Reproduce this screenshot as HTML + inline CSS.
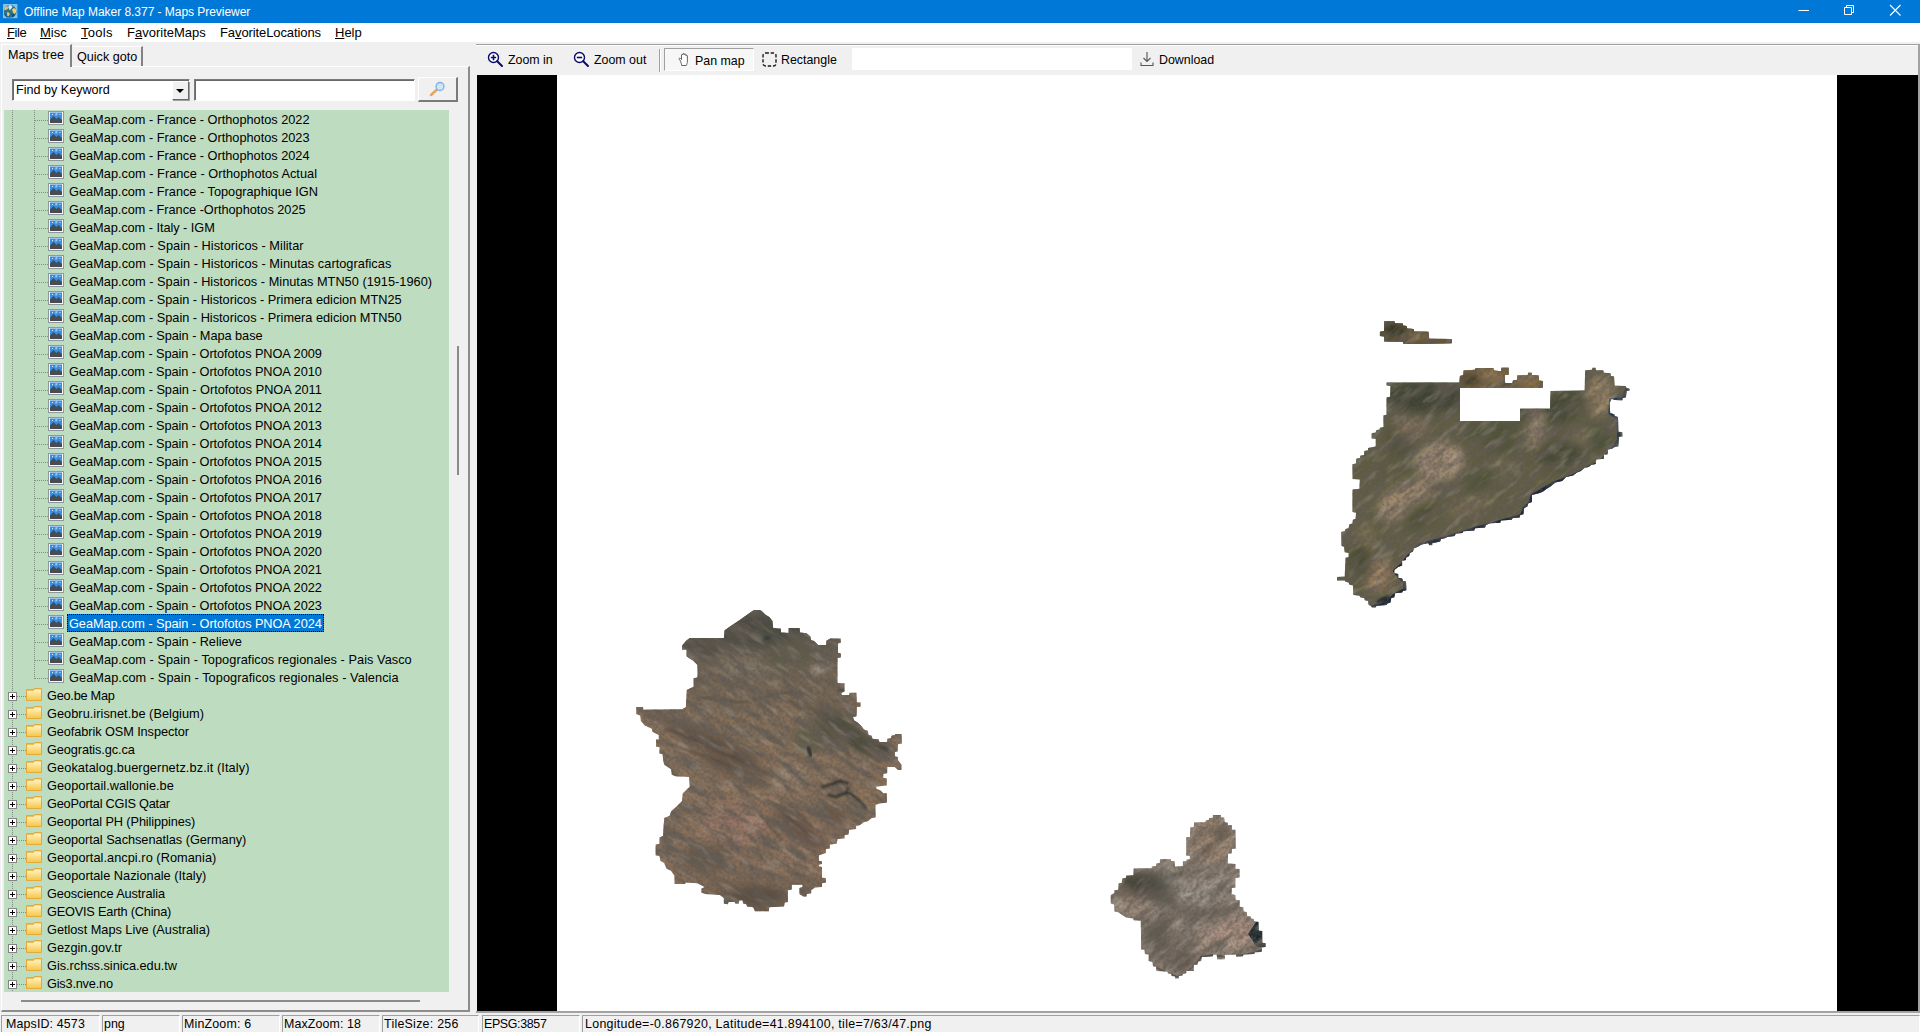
<!DOCTYPE html>
<html><head><meta charset="utf-8"><title>Offline Map Maker</title>
<style>
*{box-sizing:border-box;margin:0;padding:0}
html,body{width:1920px;height:1032px;overflow:hidden;background:#f0f0f0}
body{font-family:"Liberation Sans",sans-serif;font-size:12.5px;color:#000;position:relative}
i,b{display:block;font-style:normal;font-weight:normal}
.abs{position:absolute}
#title{position:absolute;left:0;top:0;width:1920px;height:23px;background:#0078d7;color:#fff}
#title .txt{position:absolute;left:24px;top:5px;font-size:12px;line-height:15px;white-space:nowrap;letter-spacing:-0.04px}
#menu{position:absolute;left:0;top:23px;width:1920px;height:19px;background:#fff}
#menu span{position:absolute;top:2px;font-size:13px;line-height:16px;white-space:nowrap}
#menu u{text-decoration:underline;text-underline-offset:1px}
/* left tab control */
#tabpage{position:absolute;left:1px;top:66px;width:469px;height:946px;border-top:1px solid #fff;border-left:1px solid #fff;border-right:2px solid #8c8c8c;border-bottom:2px solid #8c8c8c;background:#f0f0f0}
.tab{position:absolute;font-size:12.6px;line-height:15px;white-space:nowrap;background:#f0f0f0}
#tab1{left:1px;top:44px;width:71px;height:23px;border-left:1px solid #fff;border-top:1px solid #fff;border-right:2px solid #828282;padding:3px 0 0 6px;z-index:2}
#tab2{left:73px;top:46px;width:70px;height:20px;border-top:1px solid #fff;border-right:2px solid #828282;padding:3px 0 0 4px}
#combo{position:absolute;left:12px;top:79px;width:178px;height:22px;background:#fff;border:1px solid #7a7a7a;border-right-color:#fff;border-bottom-color:#fff;box-shadow:inset 1px 1px 0 #696969}
#combo .txt{position:absolute;left:3px;top:3px;font-size:12.6px;line-height:15px;white-space:nowrap}
#combo .btn{position:absolute;right:0px;top:1px;width:17px;height:19px;background:#f0f0f0;border:1px solid #fff;border-right-color:#696969;border-bottom-color:#696969;box-shadow:1px 1px 0 #a0a0a0}
#combo .btn:after{content:"";position:absolute;left:3px;top:7px;border:4px solid transparent;border-top:4px solid #000;border-bottom:0}
#kw{position:absolute;left:194px;top:79px;width:221px;height:22px;background:#fff;border:1px solid #7a7a7a;border-right-color:#fff;border-bottom-color:#fff;box-shadow:inset 1px 1px 0 #696969}
#sbtn{position:absolute;left:418px;top:77px;width:40px;height:25px;background:#f0f0f0;border:1px solid #fff;border-right:2px solid #7a7a7a;border-bottom:2px solid #7a7a7a}
#tree{position:absolute;left:4px;top:110px;width:445px;height:882px;background:#bedcc0;overflow:hidden}
.r{position:relative;height:18px;white-space:nowrap}
.r .t{position:absolute;top:0;font-size:12.75px;line-height:19px;height:17px;padding:0 1px}
.img .t{left:64px}
.dir .t{left:42px}
.sel .t{background:#0078d7;color:#fff;outline:1px dotted #0a0a0a;outline-offset:-1px;height:18px;left:63px;padding:0 2px}
.v1,.v2,.h1,.h2{position:absolute;background-repeat:repeat}
.v1{left:8px;top:0;width:1px;height:18px;background-image:linear-gradient(#7f8f80 50%,transparent 50%);background-size:1px 2px}
.v2{left:30px;top:0;width:1px;height:18px;background-image:linear-gradient(#7f8f80 50%,transparent 50%);background-size:1px 2px}
.last .v2{height:11px}
.h2{left:31px;top:10px;width:13px;height:1px;background-image:linear-gradient(90deg,#7f8f80 50%,transparent 50%);background-size:2px 1px}
.h1{left:13px;top:10px;width:9px;height:1px;background-image:linear-gradient(90deg,#7f8f80 50%,transparent 50%);background-size:2px 1px}
.pl{position:absolute;left:4px;top:6px;width:9px;height:9px;border:1px solid #848484;background:#fff}
.pl:before{content:"";position:absolute;left:1px;top:3px;width:5px;height:1px;background:#000}
.pl:after{content:"";position:absolute;left:3px;top:1px;width:1px;height:5px;background:#000}
.pic{position:absolute;left:44px;top:1px}
.fol{position:absolute;left:22px;top:1px}
#vthumb{position:absolute;left:457px;top:346px;width:2px;height:129px;background:#8b8b8b}
#hthumb{position:absolute;left:21px;top:1000px;width:399px;height:2px;background:#8b8b8b}
/* right */
#rtop{position:absolute;left:476px;top:44px;width:1444px;height:1px;background:#a0a0a0}
#rtop2{position:absolute;left:476px;top:45px;width:1444px;height:1px;background:#fff}
#tool{position:absolute;left:477px;top:46px;width:1443px;height:29px;background:#f0f0f0}
#tool .tb{position:absolute;top:7px;font-size:12.4px;line-height:15px;white-space:nowrap}
#mapwrap{position:absolute;left:477px;top:75px;width:1441px;height:936px;background:#000}
#canvas{position:absolute;left:80px;top:0;width:1280px;height:936px;background:#fff}
#status{position:absolute;left:0;top:1013px;width:1920px;height:19px;background:#f0f0f0}
.sp{position:absolute;top:2px;height:17px;border-left:1px solid #a0a0a0;border-top:1px solid #a0a0a0;border-right:1px solid #fff;font-size:12.4px;line-height:15px;padding:1px 0 0 2px;white-space:nowrap}
</style></head><body>
<svg width="0" height="0" style="position:absolute">
<defs>
<g id="pic"><rect x="0.5" y="0.5" width="15" height="13" fill="#f6f7f8" stroke="#8f969c"/><rect x="2" y="1.5" width="12" height="10.5" fill="#3c8edb"/><path d="M2 12 L2 8.5 L5.5 5 L8.5 8 L10.5 6 L14 9 L14 12Z" fill="#474c52"/><rect x="4" y="3" width="1" height="1" fill="#d5eafc"/><rect x="7.5" y="2.5" width="2" height="1" fill="#d5eafc"/><rect x="7.5" y="3.5" width="1" height="1" fill="#d5eafc"/><rect x="11.5" y="3" width="1" height="1" fill="#d5eafc"/></g>
<linearGradient id="fg" x1="0" y1="0" x2="0" y2="1"><stop offset="0" stop-color="#fff3c4"/><stop offset="1" stop-color="#f6c84a"/></linearGradient>
<g id="fol"><path d="M0.5 2.5 L0.5 13.5 L15.5 13.5 L15.5 1.5 L8.5 1.5 L7 2.5Z" fill="#f0bf52" stroke="#e3a93a" stroke-width="1"/><path d="M1 4 L7.5 4 L9 2.5 L15 2.5 L15 13 L1 13Z" fill="url(#fg)"/></g>
</defs></svg>

<div id="title"><svg class="abs" style="left:3px;top:4px" width="15" height="15" viewBox="0 0 15 15"><defs><filter id="ib" x="-20%" y="-20%" width="140%" height="140%"><feGaussianBlur stdDeviation="0.55"/></filter><clipPath id="ic"><rect x="0" y="0" width="14.4" height="14.2"/></clipPath></defs><rect x="0" y="0" width="14.4" height="14.2" fill="#7cc3ef"/><g clip-path="url(#ic)" filter="url(#ib)"><circle cx="7.2" cy="7.4" r="6.3" fill="#2a6f8e"/><path d="M1.5 4 C3 2 5 2.2 6 3 C5.5 5 3.5 6 1.3 6.2Z" fill="#f2b860"/><path d="M5.5 1.5 C7.5 0.8 9 1.5 9.5 3 C8.5 4.5 7.5 6 6.5 6.2 C5.8 4.5 5.5 3 5.5 1.5Z" fill="#d7ecf4"/><path d="M9.3 5 C11 3.6 12.8 4.5 13.2 6.5 C13 9 12 10.5 10.8 9.5 C9.8 8.2 9 6.5 9.3 5Z" fill="#f6d060"/><path d="M4 8.5 C5.5 8 6.8 9 6.5 10.5 C6 12 5 12.5 4.3 11.5Z" fill="#e8d070"/><path d="M1.5 9 C2.5 11.5 4 13.2 6 13.6 C4 13.9 2 12.5 1.2 10.5Z M8 10 C9.5 11 10 12.5 9 13.5 C10.5 13 11.5 12 12 10.5Z" fill="#174a5e"/></g></svg><span class="txt">Offline Map Maker 8.377 - Maps Previewer</span>
<svg class="abs" style="left:1798px;top:5px" width="12" height="12"><path d="M0.5 5.5H11" stroke="#fff" stroke-width="1"/></svg>
<svg class="abs" style="left:1843px;top:4px" width="13" height="13"><path d="M1.5 3.5H8.5V10.5H1.5Z M3.5 3.5V1.5H10.5V8.5H8.5" stroke="#fff" fill="none" stroke-width="1"/></svg>
<svg class="abs" style="left:1889px;top:4px" width="13" height="13"><path d="M1 1L11.5 11.5M11.5 1L1 11.5" stroke="#fff" stroke-width="1.1"/></svg>
</div>
<div id="menu"><span style="left:7px;letter-spacing:-0.45px"><u>F</u>ile</span><span style="left:40px"><u>M</u>isc</span><span style="left:81px;letter-spacing:0.3px"><u>T</u>ools</span><span style="left:127px">F<u>a</u>voriteMaps</span><span style="left:220px;letter-spacing:-0.1px">Fa<u>v</u>oriteLocations</span><span style="left:335px"><u>H</u>elp</span></div>

<div id="tabpage"></div>
<div class="tab" id="tab1">Maps tree</div>
<div class="tab" id="tab2">Quick goto</div>
<div id="combo"><span class="txt">Find by Keyword</span><i class="btn"></i></div>
<div id="kw"></div>
<div id="sbtn"><svg class="abs" style="left:10px;top:3px" width="18" height="17" viewBox="0 0 18 17"><path d="M2 14 L8 8.5" stroke="#e8a55a" stroke-width="2.4" stroke-linecap="round"/><circle cx="11" cy="5.5" r="4" fill="#cfe6f7" stroke="#7fb0e6" stroke-width="1.3"/></svg></div>
<div id="tree">
<div class="r img"><i class="v1"></i><i class="v2"></i><i class="h2"></i><svg class="pic" width="16" height="14" viewBox="0 0 16 14"><use href="#pic"/></svg><span class="t" style="letter-spacing:-0.012px">GeaMap.com - France - Orthophotos 2022</span></div>
<div class="r img"><i class="v1"></i><i class="v2"></i><i class="h2"></i><svg class="pic" width="16" height="14" viewBox="0 0 16 14"><use href="#pic"/></svg><span class="t" style="letter-spacing:-0.012px">GeaMap.com - France - Orthophotos 2023</span></div>
<div class="r img"><i class="v1"></i><i class="v2"></i><i class="h2"></i><svg class="pic" width="16" height="14" viewBox="0 0 16 14"><use href="#pic"/></svg><span class="t" style="letter-spacing:-0.012px">GeaMap.com - France - Orthophotos 2024</span></div>
<div class="r img"><i class="v1"></i><i class="v2"></i><i class="h2"></i><svg class="pic" width="16" height="14" viewBox="0 0 16 14"><use href="#pic"/></svg><span class="t" style="letter-spacing:0.017px">GeaMap.com - France - Orthophotos Actual</span></div>
<div class="r img"><i class="v1"></i><i class="v2"></i><i class="h2"></i><svg class="pic" width="16" height="14" viewBox="0 0 16 14"><use href="#pic"/></svg><span class="t" style="letter-spacing:-0.006px">GeaMap.com - France - Topographique IGN</span></div>
<div class="r img"><i class="v1"></i><i class="v2"></i><i class="h2"></i><svg class="pic" width="16" height="14" viewBox="0 0 16 14"><use href="#pic"/></svg><span class="t" style="letter-spacing:-0.023px">GeaMap.com - France -Orthophotos 2025</span></div>
<div class="r img"><i class="v1"></i><i class="v2"></i><i class="h2"></i><svg class="pic" width="16" height="14" viewBox="0 0 16 14"><use href="#pic"/></svg><span class="t" style="letter-spacing:-0.037px">GeaMap.com - Italy - IGM</span></div>
<div class="r img"><i class="v1"></i><i class="v2"></i><i class="h2"></i><svg class="pic" width="16" height="14" viewBox="0 0 16 14"><use href="#pic"/></svg><span class="t" style="letter-spacing:0.037px">GeaMap.com - Spain - Historicos - Militar</span></div>
<div class="r img"><i class="v1"></i><i class="v2"></i><i class="h2"></i><svg class="pic" width="16" height="14" viewBox="0 0 16 14"><use href="#pic"/></svg><span class="t" style="letter-spacing:0.037px">GeaMap.com - Spain - Historicos - Minutas cartograficas</span></div>
<div class="r img"><i class="v1"></i><i class="v2"></i><i class="h2"></i><svg class="pic" width="16" height="14" viewBox="0 0 16 14"><use href="#pic"/></svg><span class="t" style="letter-spacing:0.016px">GeaMap.com - Spain - Historicos - Minutas MTN50 (1915-1960)</span></div>
<div class="r img"><i class="v1"></i><i class="v2"></i><i class="h2"></i><svg class="pic" width="16" height="14" viewBox="0 0 16 14"><use href="#pic"/></svg><span class="t" style="letter-spacing:-0.008px">GeaMap.com - Spain - Historicos - Primera edicion MTN25</span></div>
<div class="r img"><i class="v1"></i><i class="v2"></i><i class="h2"></i><svg class="pic" width="16" height="14" viewBox="0 0 16 14"><use href="#pic"/></svg><span class="t" style="letter-spacing:-0.008px">GeaMap.com - Spain - Historicos - Primera edicion MTN50</span></div>
<div class="r img"><i class="v1"></i><i class="v2"></i><i class="h2"></i><svg class="pic" width="16" height="14" viewBox="0 0 16 14"><use href="#pic"/></svg><span class="t" style="letter-spacing:-0.045px">GeaMap.com - Spain - Mapa base</span></div>
<div class="r img"><i class="v1"></i><i class="v2"></i><i class="h2"></i><svg class="pic" width="16" height="14" viewBox="0 0 16 14"><use href="#pic"/></svg><span class="t" style="letter-spacing:-0.060px">GeaMap.com - Spain - Ortofotos PNOA 2009</span></div>
<div class="r img"><i class="v1"></i><i class="v2"></i><i class="h2"></i><svg class="pic" width="16" height="14" viewBox="0 0 16 14"><use href="#pic"/></svg><span class="t" style="letter-spacing:-0.060px">GeaMap.com - Spain - Ortofotos PNOA 2010</span></div>
<div class="r img"><i class="v1"></i><i class="v2"></i><i class="h2"></i><svg class="pic" width="16" height="14" viewBox="0 0 16 14"><use href="#pic"/></svg><span class="t" style="letter-spacing:-0.036px">GeaMap.com - Spain - Ortofotos PNOA 2011</span></div>
<div class="r img"><i class="v1"></i><i class="v2"></i><i class="h2"></i><svg class="pic" width="16" height="14" viewBox="0 0 16 14"><use href="#pic"/></svg><span class="t" style="letter-spacing:-0.060px">GeaMap.com - Spain - Ortofotos PNOA 2012</span></div>
<div class="r img"><i class="v1"></i><i class="v2"></i><i class="h2"></i><svg class="pic" width="16" height="14" viewBox="0 0 16 14"><use href="#pic"/></svg><span class="t" style="letter-spacing:-0.060px">GeaMap.com - Spain - Ortofotos PNOA 2013</span></div>
<div class="r img"><i class="v1"></i><i class="v2"></i><i class="h2"></i><svg class="pic" width="16" height="14" viewBox="0 0 16 14"><use href="#pic"/></svg><span class="t" style="letter-spacing:-0.060px">GeaMap.com - Spain - Ortofotos PNOA 2014</span></div>
<div class="r img"><i class="v1"></i><i class="v2"></i><i class="h2"></i><svg class="pic" width="16" height="14" viewBox="0 0 16 14"><use href="#pic"/></svg><span class="t" style="letter-spacing:-0.060px">GeaMap.com - Spain - Ortofotos PNOA 2015</span></div>
<div class="r img"><i class="v1"></i><i class="v2"></i><i class="h2"></i><svg class="pic" width="16" height="14" viewBox="0 0 16 14"><use href="#pic"/></svg><span class="t" style="letter-spacing:-0.060px">GeaMap.com - Spain - Ortofotos PNOA 2016</span></div>
<div class="r img"><i class="v1"></i><i class="v2"></i><i class="h2"></i><svg class="pic" width="16" height="14" viewBox="0 0 16 14"><use href="#pic"/></svg><span class="t" style="letter-spacing:-0.060px">GeaMap.com - Spain - Ortofotos PNOA 2017</span></div>
<div class="r img"><i class="v1"></i><i class="v2"></i><i class="h2"></i><svg class="pic" width="16" height="14" viewBox="0 0 16 14"><use href="#pic"/></svg><span class="t" style="letter-spacing:-0.060px">GeaMap.com - Spain - Ortofotos PNOA 2018</span></div>
<div class="r img"><i class="v1"></i><i class="v2"></i><i class="h2"></i><svg class="pic" width="16" height="14" viewBox="0 0 16 14"><use href="#pic"/></svg><span class="t" style="letter-spacing:-0.060px">GeaMap.com - Spain - Ortofotos PNOA 2019</span></div>
<div class="r img"><i class="v1"></i><i class="v2"></i><i class="h2"></i><svg class="pic" width="16" height="14" viewBox="0 0 16 14"><use href="#pic"/></svg><span class="t" style="letter-spacing:-0.060px">GeaMap.com - Spain - Ortofotos PNOA 2020</span></div>
<div class="r img"><i class="v1"></i><i class="v2"></i><i class="h2"></i><svg class="pic" width="16" height="14" viewBox="0 0 16 14"><use href="#pic"/></svg><span class="t" style="letter-spacing:-0.060px">GeaMap.com - Spain - Ortofotos PNOA 2021</span></div>
<div class="r img"><i class="v1"></i><i class="v2"></i><i class="h2"></i><svg class="pic" width="16" height="14" viewBox="0 0 16 14"><use href="#pic"/></svg><span class="t" style="letter-spacing:-0.060px">GeaMap.com - Spain - Ortofotos PNOA 2022</span></div>
<div class="r img"><i class="v1"></i><i class="v2"></i><i class="h2"></i><svg class="pic" width="16" height="14" viewBox="0 0 16 14"><use href="#pic"/></svg><span class="t" style="letter-spacing:-0.060px">GeaMap.com - Spain - Ortofotos PNOA 2023</span></div>
<div class="r img sel"><i class="v1"></i><i class="v2"></i><i class="h2"></i><svg class="pic" width="16" height="14" viewBox="0 0 16 14"><use href="#pic"/></svg><span class="t" style="letter-spacing:-0.060px">GeaMap.com - Spain - Ortofotos PNOA 2024</span></div>
<div class="r img"><i class="v1"></i><i class="v2"></i><i class="h2"></i><svg class="pic" width="16" height="14" viewBox="0 0 16 14"><use href="#pic"/></svg><span class="t" style="letter-spacing:-0.053px">GeaMap.com - Spain - Relieve</span></div>
<div class="r img"><i class="v1"></i><i class="v2"></i><i class="h2"></i><svg class="pic" width="16" height="14" viewBox="0 0 16 14"><use href="#pic"/></svg><span class="t" style="letter-spacing:0.041px">GeaMap.com - Spain - Topograficos regionales - Pais Vasco</span></div>
<div class="r img last"><i class="v1"></i><i class="v2"></i><i class="h2"></i><svg class="pic" width="16" height="14" viewBox="0 0 16 14"><use href="#pic"/></svg><span class="t" style="letter-spacing:0.075px">GeaMap.com - Spain - Topograficos regionales - Valencia</span></div>
<div class="r dir"><i class="v1"></i><i class="h1"></i><b class="pl"></b><svg class="fol" width="16" height="14" viewBox="0 0 16 14"><use href="#fol"/></svg><span class="t" style="letter-spacing:-0.252px">Geo.be Map</span></div>
<div class="r dir"><i class="v1"></i><i class="h1"></i><b class="pl"></b><svg class="fol" width="16" height="14" viewBox="0 0 16 14"><use href="#fol"/></svg><span class="t" style="letter-spacing:0.042px">Geobru.irisnet.be (Belgium)</span></div>
<div class="r dir"><i class="v1"></i><i class="h1"></i><b class="pl"></b><svg class="fol" width="16" height="14" viewBox="0 0 16 14"><use href="#fol"/></svg><span class="t" style="letter-spacing:-0.089px">Geofabrik OSM Inspector</span></div>
<div class="r dir"><i class="v1"></i><i class="h1"></i><b class="pl"></b><svg class="fol" width="16" height="14" viewBox="0 0 16 14"><use href="#fol"/></svg><span class="t" style="letter-spacing:-0.107px">Geogratis.gc.ca</span></div>
<div class="r dir"><i class="v1"></i><i class="h1"></i><b class="pl"></b><svg class="fol" width="16" height="14" viewBox="0 0 16 14"><use href="#fol"/></svg><span class="t" style="letter-spacing:0.093px">Geokatalog.buergernetz.bz.it (Italy)</span></div>
<div class="r dir"><i class="v1"></i><i class="h1"></i><b class="pl"></b><svg class="fol" width="16" height="14" viewBox="0 0 16 14"><use href="#fol"/></svg><span class="t" style="letter-spacing:0.030px">Geoportail.wallonie.be</span></div>
<div class="r dir"><i class="v1"></i><i class="h1"></i><b class="pl"></b><svg class="fol" width="16" height="14" viewBox="0 0 16 14"><use href="#fol"/></svg><span class="t" style="letter-spacing:-0.240px">GeoPortal CGIS Qatar</span></div>
<div class="r dir"><i class="v1"></i><i class="h1"></i><b class="pl"></b><svg class="fol" width="16" height="14" viewBox="0 0 16 14"><use href="#fol"/></svg><span class="t" style="letter-spacing:-0.110px">Geoportal PH (Philippines)</span></div>
<div class="r dir"><i class="v1"></i><i class="h1"></i><b class="pl"></b><svg class="fol" width="16" height="14" viewBox="0 0 16 14"><use href="#fol"/></svg><span class="t" style="letter-spacing:-0.041px">Geoportal Sachsenatlas (Germany)</span></div>
<div class="r dir"><i class="v1"></i><i class="h1"></i><b class="pl"></b><svg class="fol" width="16" height="14" viewBox="0 0 16 14"><use href="#fol"/></svg><span class="t" style="letter-spacing:0.049px">Geoportal.ancpi.ro (Romania)</span></div>
<div class="r dir"><i class="v1"></i><i class="h1"></i><b class="pl"></b><svg class="fol" width="16" height="14" viewBox="0 0 16 14"><use href="#fol"/></svg><span class="t" style="letter-spacing:0.020px">Geoportale Nazionale (Italy)</span></div>
<div class="r dir"><i class="v1"></i><i class="h1"></i><b class="pl"></b><svg class="fol" width="16" height="14" viewBox="0 0 16 14"><use href="#fol"/></svg><span class="t" style="letter-spacing:-0.094px">Geoscience Australia</span></div>
<div class="r dir"><i class="v1"></i><i class="h1"></i><b class="pl"></b><svg class="fol" width="16" height="14" viewBox="0 0 16 14"><use href="#fol"/></svg><span class="t" style="letter-spacing:-0.209px">GEOVIS Earth (China)</span></div>
<div class="r dir"><i class="v1"></i><i class="h1"></i><b class="pl"></b><svg class="fol" width="16" height="14" viewBox="0 0 16 14"><use href="#fol"/></svg><span class="t" style="letter-spacing:-0.025px">Getlost Maps Live (Australia)</span></div>
<div class="r dir"><i class="v1"></i><i class="h1"></i><b class="pl"></b><svg class="fol" width="16" height="14" viewBox="0 0 16 14"><use href="#fol"/></svg><span class="t" style="letter-spacing:0.009px">Gezgin.gov.tr</span></div>
<div class="r dir"><i class="v1"></i><i class="h1"></i><b class="pl"></b><svg class="fol" width="16" height="14" viewBox="0 0 16 14"><use href="#fol"/></svg><span class="t" style="letter-spacing:-0.018px">Gis.rchss.sinica.edu.tw</span></div>
<div class="r dir"><i class="v1"></i><i class="h1"></i><b class="pl"></b><svg class="fol" width="16" height="14" viewBox="0 0 16 14"><use href="#fol"/></svg><span class="t" style="letter-spacing:-0.205px">Gis3.nve.no</span></div>
</div>
<i id="vthumb"></i><i id="hthumb"></i>

<i id="rtop"></i><i id="rtop2"></i>
<div id="tool">
<svg class="abs" style="left:10px;top:5px" width="17" height="17" viewBox="0 0 17 17"><circle cx="6.5" cy="6.5" r="5" fill="#fff" stroke="#0a0a6e" stroke-width="1.4"/><path d="M3.8 6.5H9.2M6.5 3.8V9.2" stroke="#0a0a6e" stroke-width="1.6"/><path d="M10.2 10.2L15 15" stroke="#0a0a6e" stroke-width="2" stroke-linecap="round"/></svg>
<span class="tb" style="left:31px">Zoom in</span>
<svg class="abs" style="left:96px;top:5px" width="17" height="17" viewBox="0 0 17 17"><circle cx="6.5" cy="6.5" r="5" fill="#fff" stroke="#0a0a6e" stroke-width="1.4"/><path d="M3.8 6.5H9.2" stroke="#0a0a6e" stroke-width="1.6"/><path d="M10.2 10.2L15 15" stroke="#0a0a6e" stroke-width="2" stroke-linecap="round"/></svg>
<span class="tb" style="left:117px">Zoom out</span>
<i class="abs" style="left:182px;top:3px;width:1px;height:23px;background:#a0a0a0"></i><i class="abs" style="left:183px;top:3px;width:1px;height:23px;background:#fff"></i>
<div class="abs" style="left:187px;top:2px;width:90px;height:23px;background:#f7f7f7;border-left:1px solid #a0a0a0;border-top:1px solid #a0a0a0;border-right:1px solid #fff;border-bottom:1px solid #fff"></div>
<svg class="abs" style="left:200px;top:6px" width="14" height="17" viewBox="0 0 14 17"><path d="M3.5 9 L2.2 7.2 C1.6 6.4 2.8 5.6 3.5 6.4 L4.5 7.5 V3 C4.5 2 6 2 6 3 V2.2 C6 1.2 7.5 1.2 7.5 2.2 V2.8 C7.5 1.9 9 1.9 9 2.8 V3.8 C9 3 10.4 3 10.4 3.9 V9 C10.4 11 9.8 12.5 9.3 13.5 H4.8 C4.5 12 4 10.5 3.5 9Z" fill="#fff" stroke="#555" stroke-width="0.9"/></svg>
<span class="tb" style="left:218px;top:8px">Pan map</span>
<svg class="abs" style="left:285px;top:6px" width="15" height="15" viewBox="0 0 15 15"><rect x="1" y="1" width="13" height="13" rx="2.5" fill="none" stroke="#1a1a1a" stroke-width="1.4" stroke-dasharray="3.4 1.8"/></svg>
<span class="tb" style="left:304px">Rectangle</span>
<div class="abs" style="left:375px;top:2px;width:280px;height:22px;background:#fff"></div>
<svg class="abs" style="left:663px;top:5px" width="14" height="16" viewBox="0 0 14 16"><path d="M7 1V10M3.5 7L7 10.5L10.5 7" fill="none" stroke="#555" stroke-width="1.1"/><path d="M1 11.5V14.5H13V11.5" fill="none" stroke="#555" stroke-width="1.1"/></svg>
<span class="tb" style="left:682px">Download</span>
</div>
<i class="abs" style="left:476px;top:1011px;width:1444px;height:2px;background:linear-gradient(#9c9c9c,#a8a8a8)"></i><i class="abs" style="left:476px;top:1013px;width:1444px;height:1px;background:#fff"></i><i class="abs" style="left:1918px;top:44px;width:2px;height:969px;background:#a2a2a2"></i>
<div id="mapwrap"><div id="canvas">
<svg class="abs" style="left:0;top:0" width="1280" height="936" viewBox="557 75 1280 936">
<defs>
<clipPath id="cExt"><polygon points="760.0,610.1 761.6,610.9 765.4,614.7 769.3,617.1 772.4,620.9 773.2,627.9 780.9,628.7 780.9,632.6 788.7,632.9 788.7,627.9 799.5,627.9 800.0,632.6 806.5,633.3 810.4,636.4 811.2,640.3 814.3,641.1 818.1,645.0 825.9,645.0 826.7,640.6 830.5,638.4 840.6,638.4 840.9,642.6 838.0,643.4 838.0,652.7 840.9,653.5 840.9,657.4 837.5,658.1 837.5,682.9 844.5,683.3 844.5,691.5 841.4,693.0 841.9,694.9 849.1,694.9 849.6,692.7 856.4,692.7 856.9,702.3 860.5,702.6 860.5,706.7 856.9,707.0 856.4,716.3 853.0,717.1 853.8,720.2 857.7,722.5 860.8,725.6 863.9,729.5 867.8,731.0 868.5,734.9 871.6,735.7 872.4,738.8 878.6,739.5 879.4,741.9 887.1,741.9 887.4,738.8 891.0,738.0 891.5,735.7 894.9,734.9 895.2,734.1 901.4,734.1 901.9,743.4 898.0,744.2 897.7,751.2 894.9,751.9 894.9,756.6 897.7,756.9 897.7,760.0 901.4,764.7 901.4,770.1 898.0,770.1 894.9,767.0 887.4,767.0 887.1,773.2 883.3,774.0 883.3,777.8 886.8,778.6 886.8,785.6 876.3,786.4 876.3,788.7 880.2,790.2 883.3,793.3 886.8,793.3 886.8,802.6 879.4,803.4 875.5,805.0 875.5,817.4 871.6,818.1 867.8,821.2 863.9,822.0 860.0,825.1 856.1,825.9 856.1,829.0 849.1,829.8 848.4,834.4 844.5,835.2 844.5,838.3 837.5,839.1 836.7,843.7 829.8,844.5 829.8,848.4 825.9,849.1 825.9,853.0 818.9,855.3 818.9,860.8 822.0,861.6 822.0,863.9 818.9,864.7 818.9,866.2 822.0,867.0 822.0,877.8 825.9,878.1 825.9,882.5 822.0,883.3 822.0,887.1 815.0,887.4 811.2,890.2 811.2,893.3 806.5,894.1 806.5,896.4 803.4,896.4 799.5,894.1 799.5,887.9 802.6,887.1 802.2,884.8 791.8,884.8 791.8,889.5 787.9,890.2 787.9,901.9 784.8,902.6 784.0,906.5 769.3,907.3 768.8,911.2 768.8,911.2 754.9,911.2 753.3,907.3 747.1,906.5 746.4,904.2 743.3,903.4 742.5,900.3 739.4,900.3 738.6,903.4 735.5,903.4 734.7,901.9 728.5,901.9 727.8,904.2 723.9,903.4 723.9,898.0 720.0,894.9 705.3,894.1 701.4,892.6 701.4,888.7 704.5,887.1 697.5,883.3 685.9,882.5 685.1,884.0 674.6,884.0 674.3,875.5 671.2,870.9 666.5,868.5 664.2,863.1 660.3,860.8 659.5,856.1 655.7,855.3 655.7,844.5 659.5,843.7 659.5,837.5 663.1,836.0 664.2,818.1 669.6,815.8 671.2,811.2 675.0,808.1 678.9,804.2 682.0,801.1 682.8,793.3 686.7,789.5 689.8,787.1 689.0,777.1 675.8,776.3 671.9,774.7 671.2,769.3 664.2,764.7 663.1,760.0 662.6,754.3 659.5,753.5 659.5,747.3 656.0,746.5 656.0,739.5 658.8,739.5 658.8,734.9 652.6,731.8 651.8,728.7 644.8,725.6 640.9,720.9 640.2,715.5 636.3,714.0 636.3,707.0 643.0,707.0 643.3,709.8 682.0,709.3 685.9,707.0 686.7,689.9 693.6,686.8 693.6,678.3 697.5,677.5 697.5,665.1 692.9,660.5 686.7,656.6 686.7,649.6 682.0,649.6 682.0,645.7 685.9,641.0 689.8,638.0 723.9,638.0 724.7,630.2 731.6,625.6 739.4,620.2 747.1,614.7 754.1,610.1"/></clipPath>
<clipPath id="cCat"><polygon points="1386.6,382.6 1459.5,382.6 1459.9,375.9 1463.3,375.1 1463.6,370.5 1475.0,369.7 1475.7,368.1 1493.2,368.1 1494.0,370.5 1500.9,371.2 1501.4,367.7 1508.7,367.7 1508.7,374.8 1504.8,375.1 1505.1,382.9 1512.6,383.2 1512.9,380.5 1516.9,380.1 1517.2,375.4 1527.8,375.1 1528.1,372.8 1531.5,372.8 1531.9,375.1 1538.6,375.4 1538.9,380.5 1542.8,381.0 1542.8,387.7 1460.0,387.9 1460.0,420.9 1520.0,420.9 1520.0,408.8 1550.1,408.8 1550.5,390.9 1584.7,390.6 1585.1,370.2 1591.9,369.7 1592.4,367.7 1595.5,367.7 1596.0,370.2 1603.3,370.5 1603.7,372.8 1610.5,373.3 1611.0,375.9 1614.1,376.4 1614.6,385.7 1625.7,386.0 1626.5,388.3 1629.6,388.8 1629.6,390.6 1626.5,390.9 1626.0,397.6 1622.6,398.1 1622.3,400.2 1614.9,399.9 1611.5,398.7 1609.5,403.0 1610.2,413.1 1614.1,414.2 1614.9,416.2 1618.0,417.0 1618.3,431.7 1622.3,432.2 1622.6,436.4 1618.8,436.8 1618.3,446.4 1614.9,446.7 1611.8,448.8 1607.9,449.5 1607.4,454.2 1604.0,454.5 1603.7,458.8 1596.3,459.6 1595.5,463.9 1591.6,464.7 1588.5,467.0 1584.7,467.8 1580.8,470.9 1576.9,472.4 1573.0,475.5 1566.0,477.1 1562.2,480.9 1555.2,482.5 1550.5,486.4 1546.7,488.7 1542.8,491.8 1538.9,493.3 1531.9,494.9 1531.9,501.9 1528.1,503.4 1527.3,506.5 1524.2,508.1 1523.4,514.3 1520.3,515.0 1519.5,517.4 1512.6,518.1 1511.8,519.7 1500.9,520.5 1500.2,522.8 1490.1,523.3 1485.8,525.1 1485.0,527.4 1475.0,528.2 1474.2,530.5 1463.3,531.3 1462.6,532.9 1455.6,533.6 1454.8,536.0 1447.8,536.7 1444.7,538.3 1440.9,539.1 1440.1,541.4 1437.0,542.2 1432.3,542.9 1432.3,545.3 1429.2,545.3 1428.4,542.9 1421.5,544.5 1417.6,546.8 1413.7,548.4 1412.9,551.5 1409.8,553.0 1409.1,556.1 1406.0,557.7 1406.0,560.0 1402.1,560.8 1402.1,565.4 1398.2,567.0 1394.3,570.1 1394.3,573.2 1398.2,574.0 1398.2,577.8 1402.1,578.6 1402.9,580.9 1406.0,581.7 1406.3,590.2 1402.9,591.0 1402.1,592.6 1395.1,593.3 1394.3,597.2 1391.2,598.0 1390.5,602.6 1387.4,603.4 1386.6,605.0 1376.5,605.7 1375.7,607.3 1371.9,607.3 1371.1,605.7 1368.8,605.0 1368.0,601.1 1364.9,600.3 1364.1,598.0 1360.2,597.2 1359.5,595.7 1353.3,594.9 1352.9,585.6 1349.4,584.8 1348.6,582.5 1345.5,581.7 1344.7,580.6 1337.0,580.6 1337.0,577.1 1344.7,576.6 1345.5,557.7 1348.6,556.9 1348.6,553.0 1344.7,552.2 1344.0,546.8 1341.6,546.0 1341.2,532.1 1344.7,531.3 1345.5,529.0 1348.6,528.2 1349.4,524.3 1352.5,523.6 1352.9,519.7 1355.6,518.9 1356.0,512.7 1352.5,511.9 1352.5,489.5 1359.5,488.7 1359.8,479.4 1352.5,478.9 1352.5,464.3 1356.0,463.5 1356.4,458.8 1360.2,458.1 1360.2,455.7 1364.1,455.0 1364.4,451.1 1368.0,450.3 1368.0,448.0 1371.9,447.2 1375.7,446.4 1375.7,438.7 1371.6,438.4 1371.6,433.3 1375.7,432.5 1376.2,430.2 1379.6,429.4 1379.9,427.8 1383.5,427.1 1383.5,415.4 1386.6,414.7 1386.6,397.6 1390.2,396.8 1390.5,386.0 1386.6,385.2"/><polygon points="1384.3,321.2 1394.3,321.2 1395.1,323.2 1402.9,323.6 1402.9,325.5 1406.7,326.0 1407.2,328.6 1413.7,328.9 1414.0,331.4 1428.4,331.7 1429.2,338.7 1451.7,339.1 1451.7,343.3 1429.2,343.8 1403.6,344.1 1402.9,341.8 1384.3,341.5 1384.0,336.4 1379.9,336.0 1379.9,331.7 1384.0,330.9"/></clipPath>
<clipPath id="cMur"><polygon points="1212.9,815.1 1220.9,815.1 1220.9,817.2 1224.2,817.7 1224.6,822.3 1227.9,822.8 1227.9,825.2 1231.7,825.2 1232.1,829.8 1235.4,829.8 1235.7,848.6 1231.7,849.0 1231.7,853.3 1227.9,853.7 1227.9,863.6 1235.4,863.9 1235.4,868.7 1239.5,868.9 1239.6,877.6 1235.4,878.1 1235.4,887.5 1231.7,887.9 1231.7,894.0 1235.4,895.0 1235.7,899.7 1239.6,900.2 1239.6,906.7 1243.4,907.2 1243.4,911.4 1246.7,911.9 1247.2,916.1 1250.4,916.6 1250.9,918.4 1253.7,918.9 1254.2,921.2 1258.4,921.7 1258.6,930.6 1262.2,931.1 1262.2,942.8 1265.4,943.3 1265.4,947.0 1262.0,947.5 1261.7,952.0 1254.7,952.2 1254.2,954.1 1243.4,954.5 1242.9,956.4 1236.4,956.4 1235.9,954.5 1224.7,955.0 1224.7,959.2 1217.2,959.2 1216.7,954.5 1212.9,954.5 1212.9,956.4 1201.7,956.9 1201.2,961.1 1198.0,961.5 1197.5,964.4 1193.7,964.8 1193.7,970.9 1186.2,971.1 1186.2,973.3 1182.9,973.7 1182.5,975.6 1178.7,976.1 1178.7,978.4 1175.0,978.4 1175.0,976.5 1171.7,976.1 1171.2,973.7 1168.0,973.3 1167.5,971.4 1156.2,970.9 1156.2,966.7 1153.0,966.2 1152.5,962.0 1148.7,961.1 1148.7,954.5 1145.0,954.1 1144.5,949.8 1141.2,949.4 1140.8,920.5 1133.7,920.3 1133.3,918.4 1126.2,917.5 1122.5,915.2 1118.3,912.3 1114.5,911.4 1114.1,904.4 1110.8,903.4 1110.8,895.0 1114.5,893.0 1114.5,890.3 1118.3,889.8 1118.7,883.3 1122.0,882.8 1122.5,878.6 1125.8,878.1 1126.2,875.8 1133.5,875.3 1133.7,868.5 1151.5,868.3 1152.0,866.4 1156.0,865.9 1156.2,863.6 1159.8,863.1 1160.0,859.2 1170.8,859.2 1171.0,861.0 1174.5,861.2 1175.0,866.4 1182.9,865.9 1182.9,861.2 1186.2,861.2 1186.7,859.4 1189.8,858.9 1189.8,856.1 1186.2,855.6 1186.2,837.3 1190.0,836.9 1190.4,827.5 1193.7,827.0 1194.2,822.6 1205.4,822.3 1205.9,820.5 1208.7,820.0 1209.2,818.1 1212.9,817.7"/></clipPath>
<linearGradient id="gExt" x1="0" y1="0" x2="0" y2="1"><stop offset="0" stop-color="#57544a"/><stop offset="0.2" stop-color="#706352"/><stop offset="0.42" stop-color="#8a725b"/><stop offset="0.8" stop-color="#8e725c"/><stop offset="1" stop-color="#6f5e4d"/></linearGradient>
<filter id="b0" x="-10%" y="-10%" width="120%" height="120%"><feGaussianBlur stdDeviation="0.5"/></filter>
<filter id="b1" x="-10%" y="-10%" width="120%" height="120%"><feGaussianBlur stdDeviation="0.8"/></filter>
<filter id="b3" x="-50%" y="-50%" width="200%" height="200%"><feGaussianBlur stdDeviation="2.5"/></filter>
<filter id="b6" x="-50%" y="-50%" width="200%" height="200%"><feGaussianBlur stdDeviation="5"/></filter>
<filter id="nz1" x="0" y="0" width="100%" height="100%"><feTurbulence type="fractalNoise" baseFrequency="0.035 0.13" numOctaves="4" seed="7"/><feColorMatrix type="matrix" values="0 0 0 0 0.13  0 0 0 0 0.11  0 0 0 0 0.09  3.2 0 0 0 -1.25"/></filter>
<filter id="nz2" x="0" y="0" width="100%" height="100%"><feTurbulence type="fractalNoise" baseFrequency="0.05 0.16" numOctaves="3" seed="23"/><feColorMatrix type="matrix" values="0 0 0 0 0.75  0 0 0 0 0.68  0 0 0 0 0.58  0 3 0 0 -1.55"/></filter>
<filter id="nz3" x="0" y="0" width="100%" height="100%"><feTurbulence type="fractalNoise" baseFrequency="0.3" numOctaves="2" seed="11"/><feColorMatrix type="matrix" values="0 0 0 0 0.1  0 0 0 0 0.09  0 0 0 0 0.08  0 0 3 0 -1.2"/></filter>
</defs>
<g clip-path="url(#cExt)"><rect x="630" y="600" width="280" height="320" fill="url(#gExt)"/><ellipse cx="755" cy="628" rx="55" ry="20" fill="#4c4b43" opacity="0.9" filter="url(#b6)"/><ellipse cx="700" cy="648" rx="22" ry="10" fill="#4f4e45" opacity="0.8" filter="url(#b6)"/><ellipse cx="800" cy="650" rx="34" ry="12" fill="#5a5b47" opacity="0.8" filter="url(#b6)" transform="rotate(-18 800 650)"/><ellipse cx="742" cy="668" rx="28" ry="9" fill="#958878" opacity="0.6" filter="url(#b6)"/><ellipse cx="822" cy="668" rx="14" ry="5" fill="#a39a8c" opacity="0.7" filter="url(#b3)" transform="rotate(-20 822 668)"/><ellipse cx="845" cy="730" rx="34" ry="12" fill="#47483a" opacity="0.9" filter="url(#b6)" transform="rotate(38 845 730)"/><ellipse cx="812" cy="738" rx="20" ry="14" fill="#5b5c46" opacity="0.85" filter="url(#b6)"/><ellipse cx="880" cy="748" rx="18" ry="8" fill="#4a4842" opacity="0.8" filter="url(#b6)" transform="rotate(30 880 748)"/><ellipse cx="715" cy="745" rx="50" ry="9" fill="#54463c" opacity="0.8" filter="url(#b6)" transform="rotate(24 715 745)"/><ellipse cx="735" cy="770" rx="36" ry="7" fill="#57483d" opacity="0.7" filter="url(#b6)" transform="rotate(22 735 770)"/><ellipse cx="680" cy="722" rx="30" ry="8" fill="#6e5d4e" opacity="0.6" filter="url(#b6)" transform="rotate(15 680 722)"/><ellipse cx="790" cy="775" rx="18" ry="10" fill="#9a8c7c" opacity="0.5" filter="url(#b6)"/><ellipse cx="735" cy="825" rx="34" ry="22" fill="#9d7868" opacity="0.75" filter="url(#b6)"/><ellipse cx="800" cy="830" rx="30" ry="10" fill="#5b4a3f" opacity="0.7" filter="url(#b6)" transform="rotate(35 800 830)"/><ellipse cx="835" cy="815" rx="20" ry="8" fill="#5d4d40" opacity="0.7" filter="url(#b6)" transform="rotate(30 835 815)"/><ellipse cx="850" cy="790" rx="26" ry="14" fill="#8a7258" opacity="0.5" filter="url(#b6)"/><ellipse cx="705" cy="858" rx="26" ry="14" fill="#5d5448" opacity="0.75" filter="url(#b6)"/><ellipse cx="755" cy="895" rx="30" ry="10" fill="#51473b" opacity="0.75" filter="url(#b6)"/><ellipse cx="780" cy="860" rx="28" ry="16" fill="#917660" opacity="0.5" filter="url(#b6)"/><ellipse cx="668" cy="835" rx="8" ry="18" fill="#6a6058" opacity="0.6" filter="url(#b6)"/><path d="M698 699 C710 696 722 700 736 702 S770 694 786 693 S806 696 818 700" fill="none" stroke="#453f3a" stroke-width="2" opacity="0.6" stroke-linecap="round" stroke-linejoin="round" filter="url(#b1)"/><path d="M803 702 L830 722 L858 748 L880 762 M790 700 L825 730 L850 756" fill="none" stroke="#3f4036" stroke-width="2.2" opacity="0.6" stroke-linecap="round" stroke-linejoin="round" filter="url(#b1)"/><path d="M665 728 L700 742 L740 760 L768 774 M672 745 L710 758 L742 772" fill="none" stroke="#463a32" stroke-width="2" opacity="0.6" stroke-linecap="round" stroke-linejoin="round" filter="url(#b1)"/><path d="M775 805 L800 828 L818 846 M790 805 L812 826 M760 815 L782 840" fill="none" stroke="#4a3c33" stroke-width="2.2" opacity="0.55" stroke-linecap="round" stroke-linejoin="round" filter="url(#b1)"/><path d="M808 748 L811 756" fill="none" stroke="#20262a" stroke-width="2.5" opacity="0.9" stroke-linecap="round" stroke-linejoin="round" filter="url(#b1)"/><rect x="570" y="540" width="400" height="440" filter="url(#nz1)" opacity="0.85" transform="rotate(33 770 760)"/><rect x="630" y="600" width="280" height="320" filter="url(#nz3)" opacity="0.45"/><rect x="570" y="540" width="400" height="440" filter="url(#nz2)" opacity="0.2" transform="rotate(33 770 760)"/><path d="M822 787 L832 784 L840 781 L848 783 M828 795 L836 797 L842 794 L850 793 L856 798 L862 803 L866 808 M846 793 L848 788" fill="none" stroke="#1c2224" stroke-width="2" opacity="0.85" stroke-linecap="round" stroke-linejoin="round" filter="url(#b1)"/><path d="M808 747 L811 756" fill="none" stroke="#1e2428" stroke-width="2.2" opacity="0.8" stroke-linecap="round" stroke-linejoin="round" filter="url(#b1)"/><ellipse cx="767" cy="638" rx="3" ry="2" fill="#2a3038" opacity="0.6" filter="url(#b1)"/><ellipse cx="842" cy="690" rx="4" ry="2" fill="#3a3f48" opacity="0.55" filter="url(#b1)"/><ellipse cx="884" cy="748" rx="5" ry="2.5" fill="#3c3e42" opacity="0.55" filter="url(#b1)" transform="rotate(20 884 748)"/></g>
<g clip-path="url(#cCat)"><rect x="1330" y="310" width="310" height="310" fill="#625f45"/><rect x="1375" y="318" width="80" height="28" fill="#5a5034"/><ellipse cx="1395" cy="330" rx="10" ry="6" fill="#2f321f" opacity="0.9" filter="url(#b3)"/><ellipse cx="1420" cy="337" rx="12" ry="4" fill="#8c6f44" opacity="0.8" filter="url(#b3)"/><ellipse cx="1442" cy="341" rx="10" ry="2" fill="#6f5d38" opacity="0.8" filter="url(#b1)"/><rect x="1459" y="366" width="85" height="22" fill="#7a6440"/><ellipse cx="1470" cy="380" rx="10" ry="6" fill="#3d3a24" opacity="0.8" filter="url(#b3)"/><ellipse cx="1490" cy="375" rx="10" ry="5" fill="#9a7c50" opacity="0.8" filter="url(#b3)"/><ellipse cx="1525" cy="380" rx="12" ry="5" fill="#9c8052" opacity="0.8" filter="url(#b3)"/><ellipse cx="1508" cy="384" rx="8" ry="3" fill="#3f3b26" opacity="0.8" filter="url(#b3)"/><ellipse cx="1425" cy="397" rx="42" ry="16" fill="#3d4330" opacity="0.95" filter="url(#b6)"/><ellipse cx="1545" cy="412" rx="30" ry="13" fill="#394029" opacity="0.95" filter="url(#b6)"/><ellipse cx="1490" cy="430" rx="30" ry="8" fill="#4a4f36" opacity="0.8" filter="url(#b6)"/><ellipse cx="1570" cy="400" rx="16" ry="10" fill="#424a30" opacity="0.9" filter="url(#b6)"/><ellipse cx="1400" cy="440" rx="14" ry="16" fill="#4a4c36" opacity="0.7" filter="url(#b6)"/><ellipse cx="1500" cy="445" rx="18" ry="8" fill="#4a4e36" opacity="0.7" filter="url(#b6)"/><ellipse cx="1412" cy="428" rx="18" ry="10" fill="#8a7560" opacity="0.7" filter="url(#b6)"/><ellipse cx="1440" cy="462" rx="24" ry="20" fill="#a8927a" opacity="0.95" filter="url(#b6)"/><ellipse cx="1405" cy="500" rx="30" ry="17" fill="#a58e72" opacity="0.95" filter="url(#b6)" transform="rotate(-30 1405 500)"/><ellipse cx="1537" cy="428" rx="10" ry="24" fill="#9a8670" opacity="0.9" filter="url(#b6)"/><ellipse cx="1600" cy="395" rx="13" ry="22" fill="#968264" opacity="0.9" filter="url(#b6)"/><ellipse cx="1580" cy="440" rx="14" ry="10" fill="#8a7a60" opacity="0.6" filter="url(#b6)"/><ellipse cx="1470" cy="505" rx="24" ry="8" fill="#8f7a5e" opacity="0.6" filter="url(#b6)" transform="rotate(-25 1470 505)"/><ellipse cx="1500" cy="470" rx="14" ry="10" fill="#857660" opacity="0.5" filter="url(#b6)"/><ellipse cx="1378" cy="575" rx="15" ry="17" fill="#a08264" opacity="0.9" filter="url(#b6)"/><ellipse cx="1365" cy="540" rx="10" ry="16" fill="#8c7a5a" opacity="0.6" filter="url(#b6)"/><ellipse cx="1560" cy="455" rx="26" ry="14" fill="#454a30" opacity="0.9" filter="url(#b6)"/><ellipse cx="1600" cy="440" rx="12" ry="14" fill="#4a5034" opacity="0.8" filter="url(#b6)"/><ellipse cx="1480" cy="480" rx="20" ry="10" fill="#4e5236" opacity="0.8" filter="url(#b6)" transform="rotate(-30 1480 480)"/><ellipse cx="1420" cy="515" rx="18" ry="10" fill="#4a4d32" opacity="0.85" filter="url(#b6)" transform="rotate(-35 1420 515)"/><ellipse cx="1360" cy="562" rx="10" ry="18" fill="#42462c" opacity="0.9" filter="url(#b6)"/><ellipse cx="1395" cy="470" rx="14" ry="10" fill="#585a3c" opacity="0.7" filter="url(#b6)"/><ellipse cx="1375" cy="470" rx="12" ry="20" fill="#5c5c40" opacity="0.6" filter="url(#b6)"/><path d="M1595 465 L1573 476 L1555 483 L1532 496 L1531 503 L1524 509 L1522 516 L1500 522 L1475 529 L1447 538 L1421 545 L1409 556 L1402 565 L1395 571 L1399 576 L1405 582 L1405 590 L1394 596 L1388 604 L1372 607" fill="none" stroke="#14233f" stroke-width="4" opacity="0.95" stroke-linecap="round" stroke-linejoin="round" filter="url(#b0)"/><path d="M1627 389 L1622 399 L1611 400 L1610 413 L1618 418 L1619 440 L1612 449 L1604 458 L1595 465" fill="none" stroke="#1d3258" stroke-width="3.4" opacity="0.9" stroke-linecap="round" stroke-linejoin="round" filter="url(#b0)"/><ellipse cx="1384" cy="600" rx="8" ry="3" fill="#14202e" opacity="0.9" filter="url(#b1)" transform="rotate(-20 1384 600)"/><rect x="1280" y="260" width="410" height="410" filter="url(#nz1)" opacity="0.7" transform="rotate(-40 1485 465)"/><rect x="1330" y="310" width="310" height="310" filter="url(#nz3)" opacity="0.42"/><rect x="1280" y="260" width="410" height="410" filter="url(#nz2)" opacity="0.2" transform="rotate(-40 1485 465)"/></g>
<g clip-path="url(#cMur)"><rect x="1100" y="805" width="180" height="180" fill="#93867a"/><ellipse cx="1212" cy="840" rx="20" ry="22" fill="#a0866f" opacity="0.85" filter="url(#b6)"/><ellipse cx="1222" cy="832" rx="8" ry="10" fill="#5e554a" opacity="0.6" filter="url(#b3)" transform="rotate(30 1222 832)"/><ellipse cx="1205" cy="850" rx="8" ry="5" fill="#5b5248" opacity="0.6" filter="url(#b3)" transform="rotate(-30 1205 850)"/><ellipse cx="1145" cy="885" rx="24" ry="13" fill="#403f35" opacity="0.95" filter="url(#b6)"/><ellipse cx="1128" cy="880" rx="10" ry="8" fill="#4a473c" opacity="0.8" filter="url(#b6)"/><ellipse cx="1160" cy="935" rx="12" ry="18" fill="#58524a" opacity="0.75" filter="url(#b6)"/><ellipse cx="1180" cy="962" rx="14" ry="8" fill="#564e45" opacity="0.7" filter="url(#b6)"/><ellipse cx="1125" cy="893" rx="8" ry="8" fill="#7a6a5a" opacity="0.7" filter="url(#b3)"/><ellipse cx="1135" cy="905" rx="16" ry="8" fill="#a08a78" opacity="0.8" filter="url(#b6)"/><ellipse cx="1170" cy="880" rx="16" ry="8" fill="#6a6a5e" opacity="0.7" filter="url(#b6)"/><ellipse cx="1165" cy="900" rx="16" ry="8" fill="#4f4d43" opacity="0.7" filter="url(#b6)" transform="rotate(20 1165 900)"/><ellipse cx="1200" cy="893" rx="22" ry="10" fill="#a09a90" opacity="0.8" filter="url(#b6)"/><ellipse cx="1192" cy="915" rx="14" ry="7" fill="#5c564c" opacity="0.7" filter="url(#b6)" transform="rotate(-30 1192 915)"/><ellipse cx="1217" cy="912" rx="14" ry="5" fill="#554e45" opacity="0.75" filter="url(#b6)" transform="rotate(-35 1217 912)"/><ellipse cx="1236" cy="932" rx="22" ry="15" fill="#b59888" opacity="0.95" filter="url(#b6)"/><ellipse cx="1205" cy="940" rx="16" ry="9" fill="#a58c7c" opacity="0.8" filter="url(#b6)"/><ellipse cx="1172" cy="950" rx="16" ry="8" fill="#7a6c60" opacity="0.7" filter="url(#b6)" transform="rotate(-40 1172 950)"/><ellipse cx="1185" cy="960" rx="12" ry="5" fill="#5a5046" opacity="0.7" filter="url(#b6)" transform="rotate(-40 1185 960)"/><ellipse cx="1150" cy="935" rx="8" ry="14" fill="#5d5a50" opacity="0.7" filter="url(#b6)"/><path d="M1248 934 L1256 922 L1259 922 L1259 931 L1263 931 L1263 943 L1266 943 L1266 947 L1258 947 L1255 944Z" fill="#19262c"/><path d="M1201 957 L1213 955 L1225 957 L1243 955 L1254 953 L1262 950" fill="none" stroke="#2a3036" stroke-width="2" opacity="0.7" stroke-linecap="round" stroke-linejoin="round" filter="url(#b0)"/><path d="M1157 968 L1170 974 L1178 977 L1187 972 L1196 964 L1201 958" fill="none" stroke="#2e3032" stroke-width="1.6" opacity="0.6" stroke-linecap="round" stroke-linejoin="round" filter="url(#b0)"/><rect x="1060" y="765" width="260" height="260" filter="url(#nz1)" opacity="0.75" transform="rotate(-40 1190 895)"/><rect x="1100" y="805" width="180" height="180" filter="url(#nz3)" opacity="0.45"/><rect x="1060" y="765" width="260" height="260" filter="url(#nz2)" opacity="0.25" transform="rotate(-40 1190 895)"/></g>
</svg>
</div></div>

<div id="status">
<div class="sp" style="left:1px;width:99px;padding-left:4px;letter-spacing:0.15px"><span>MapsID: 4573</span></div>
<div class="sp" style="left:102px;width:78px;padding-left:1px"><span>png</span></div>
<div class="sp" style="left:182px;width:98px;padding-left:1px;letter-spacing:0.18px"><span>MinZoom: 6</span></div>
<div class="sp" style="left:282px;width:98px;padding-left:1px;letter-spacing:0.12px"><span>MaxZoom: 18</span></div>
<div class="sp" style="left:382px;width:97px;padding-left:1px;letter-spacing:0.27px"><span>TileSize: 256</span></div>
<div class="sp" style="left:482px;width:98px;padding-left:1px;letter-spacing:-0.33px"><span>EPSG:3857</span></div>
<div class="sp" style="left:582px;width:1338px;letter-spacing:0.298px"><span>Longitude=-0.867920, Latitude=41.894100, tile=7/63/47.png</span></div>
</div>
</body></html>
